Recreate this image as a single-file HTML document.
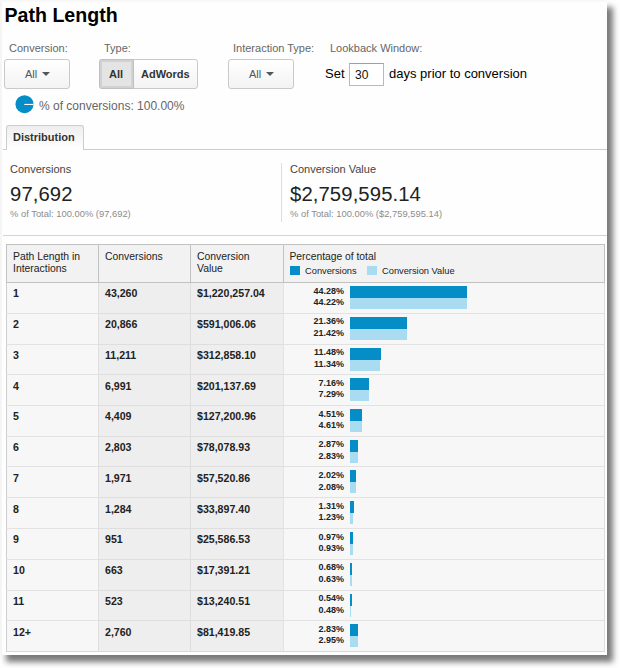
<!DOCTYPE html>
<html><head><meta charset="utf-8"><title>Path Length</title>
<style>
*{margin:0;padding:0;box-sizing:border-box}
html,body{width:620px;height:668px;overflow:hidden;background:#fff}
body{font-family:"Liberation Sans",sans-serif;position:relative;color:#333}
#page{position:absolute;left:0;top:0;width:607px;height:655px;background:#fefefe;box-shadow:6px 6.5px 6px rgba(0,0,0,.53);border-top:2px solid #f8f8f8;border-left:2px solid #f5f5f5}
#wrap{position:absolute;left:0;top:0;width:620px;height:668px}
.t{position:absolute;white-space:nowrap;line-height:1}
h1{position:absolute;left:4.5px;top:3px;font-size:19.6px;font-weight:bold;color:#000;line-height:24px;white-space:nowrap}
.lab{font-size:11px;color:#666;top:43px}
.btn{position:absolute;top:59px;height:30px;border:1px solid #c9c9c9;border-radius:3px;background:linear-gradient(#fff,#f3f3f3);font-size:11px;color:#555;line-height:28px}
.arrow{position:absolute;width:0;height:0;border-left:4px solid transparent;border-right:4px solid transparent;border-top:4px solid #555;top:12px}
.row{position:absolute;left:6px;width:599px}
.c{position:absolute;top:0;height:100%;border-top:1px solid #e2e2e2;border-left:1px solid #e2e2e2}
.c1{left:0;width:92px;background:#f7f7f7;border-left-color:#cfcfcf}
.c2{left:92px;width:92px;background:#eee;border-color:#dedede}
.c3{left:184px;width:93px;background:#eee;border-color:#dedede}
.c4{left:277px;width:322px;background:#f7f7f7;border-right:1px solid #dedede}
.row span{position:absolute;white-space:nowrap;line-height:1;font-weight:bold}
.b{font-size:10.6px;color:#222}
.p{font-size:9px;color:#222;right:261px;text-align:right}
.d,.l{position:absolute;left:344px;height:12px;top:4px;background:#058dc7}
.l{top:16px;height:11px;background:#a9dcf1}
.th{position:absolute;z-index:2;top:244px;height:39px;background:#f2f2f2;border:1px solid #c1c1c1;border-right:none}
.th span{position:absolute;left:6px;top:6px;font-size:10.4px;line-height:12px;color:#222;white-space:nowrap}
</style></head><body>
<div id="page"></div>
<div id="wrap">
<h1>Path Length</h1>
<span class="t lab" style="left:9px">Conversion:</span>
<span class="t lab" style="left:104px">Type:</span>
<span class="t lab" style="left:233px">Interaction Type:</span>
<span class="t lab" style="left:330px">Lookback Window:</span>

<div class="btn" style="left:4px;width:66px"><span style="position:absolute;left:20px">All</span><i class="arrow" style="left:37px"></i></div>
<div class="btn" style="left:228px;width:66px"><span style="position:absolute;left:20px">All</span><i class="arrow" style="left:37px"></i></div>

<div class="btn" style="left:99px;width:99px;font-weight:bold;color:#333">
 <div style="position:absolute;left:-1px;top:-1px;width:35px;height:30px;background:#e4e4e4;border:1px solid #c0c0c0;border-radius:3px 0 0 3px;box-shadow:inset 0 0 0 2px #d2d2d2"></div>
 <span style="position:absolute;left:9px">All</span>
 <span style="position:absolute;left:41px">AdWords</span>
</div>

<span class="t" style="left:325px;top:66.5px;font-size:13px;color:#000">Set</span>
<div style="position:absolute;left:349px;top:63px;width:35px;height:23px;border:1px solid #b9b9b9;border-top-color:#a0a0a0;background:#fff"></div>
<span class="t" style="left:355px;top:69px;font-size:12px;color:#111">30</span>
<span class="t" style="left:389px;top:66.5px;font-size:13px;color:#000">days prior to conversion</span>

<svg style="position:absolute;left:15px;top:95px" width="19" height="19" viewBox="0 0 19 19"><circle cx="9.5" cy="9.2" r="9" fill="#058dc7"/><rect x="9.3" y="8.9" width="9.2" height="1.1" fill="#fff"/></svg>
<span class="t" style="left:39px;top:99.5px;font-size:12px;color:#666">% of conversions: 100.00%</span>

<!-- tab -->
<div style="position:absolute;left:3px;top:149px;width:604px;height:1px;background:#ccc"></div>
<div style="position:absolute;left:6px;top:125px;width:78px;height:25px;border:1px solid #ccc;border-bottom:none;border-radius:3px 3px 0 0;background:linear-gradient(#eee,#fff)"></div>
<span class="t" style="left:13px;top:132px;font-size:11px;font-weight:bold;color:#333">Distribution</span>

<!-- metrics -->
<span class="t" style="left:10px;top:163.5px;font-size:11px;color:#444">Conversions</span>
<span class="t" style="left:10px;top:184px;font-size:20.3px;letter-spacing:.1px;color:#222">97,692</span>
<span class="t" style="left:10px;top:209px;font-size:9.4px;color:#8c8c8c">% of Total: 100.00% (97,692)</span>
<div style="position:absolute;left:281px;top:163px;width:1px;height:59px;background:#ddd"></div>
<span class="t" style="left:290px;top:163.5px;font-size:11px;color:#444">Conversion Value</span>
<span class="t" style="left:290px;top:184px;font-size:20.3px;letter-spacing:.1px;color:#222">$2,759,595.14</span>
<span class="t" style="left:290px;top:209px;font-size:9.4px;color:#8c8c8c">% of Total: 100.00% ($2,759,595.14)</span>
<div style="position:absolute;left:3px;top:235px;width:604px;height:1px;background:#d4d4d4"></div>

<!-- table header -->
<div class="th" style="left:6px;width:92px"><span>Path Length in<br>Interactions</span></div>
<div class="th" style="left:98px;width:92px"><span>Conversions</span></div>
<div class="th" style="left:190px;width:93px"><span>Conversion<br>Value</span></div>
<div class="th" style="left:283px;width:322px;border-right:1px solid #c1c1c1"><span style="font-size:10.3px;left:5.5px">Percentage of total</span>
 <i style="position:absolute;left:6px;top:21px;width:10px;height:9px;background:#058dc7"></i>
 <span style="left:21px;top:22px;font-size:9.3px;line-height:1">Conversions</span>
 <i style="position:absolute;left:83px;top:21px;width:10px;height:9px;background:#a9dcf1"></i>
 <span style="left:98px;top:22px;font-size:9.3px;line-height:1">Conversion Value</span>
</div>
<div class="row" style="top:282px;height:31px">
<div class="c c1"></div><div class="c c2"></div><div class="c c3"></div><div class="c c4"></div>
<span class="b" style="left:7px;top:6.3px">1</span>
<span class="b" style="left:99px;top:6.3px">43,260</span>
<span class="b" style="left:191px;top:6.3px">$1,220,257.04</span>
<span class="p" style="top:4.6px">44.28%</span><span class="p" style="top:16.2px">44.22%</span>
<i class="d" style="width:117px"></i><i class="l" style="width:117px"></i>
</div>
<div class="row" style="top:313px;height:31px">
<div class="c c1"></div><div class="c c2"></div><div class="c c3"></div><div class="c c4"></div>
<span class="b" style="left:7px;top:6.05px">2</span>
<span class="b" style="left:99px;top:6.05px">20,866</span>
<span class="b" style="left:191px;top:6.05px">$591,006.06</span>
<span class="p" style="top:4.35px">21.36%</span><span class="p" style="top:15.95px">21.42%</span>
<i class="d" style="width:57px"></i><i class="l" style="width:57px"></i>
</div>
<div class="row" style="top:344px;height:30px">
<div class="c c1"></div><div class="c c2"></div><div class="c c3"></div><div class="c c4"></div>
<span class="b" style="left:7px;top:5.8px">3</span>
<span class="b" style="left:99px;top:5.8px">11,211</span>
<span class="b" style="left:191px;top:5.8px">$312,858.10</span>
<span class="p" style="top:4.1px">11.48%</span><span class="p" style="top:15.7px">11.34%</span>
<i class="d" style="width:31px"></i><i class="l" style="width:30px"></i>
</div>
<div class="row" style="top:374px;height:31px">
<div class="c c1"></div><div class="c c2"></div><div class="c c3"></div><div class="c c4"></div>
<span class="b" style="left:7px;top:6.55px">4</span>
<span class="b" style="left:99px;top:6.55px">6,991</span>
<span class="b" style="left:191px;top:6.55px">$201,137.69</span>
<span class="p" style="top:4.85px">7.16%</span><span class="p" style="top:16.45px">7.29%</span>
<i class="d" style="width:19px"></i><i class="l" style="width:19px"></i>
</div>
<div class="row" style="top:405px;height:31px">
<div class="c c1"></div><div class="c c2"></div><div class="c c3"></div><div class="c c4"></div>
<span class="b" style="left:7px;top:6.3px">5</span>
<span class="b" style="left:99px;top:6.3px">4,409</span>
<span class="b" style="left:191px;top:6.3px">$127,200.96</span>
<span class="p" style="top:4.6px">4.51%</span><span class="p" style="top:16.2px">4.61%</span>
<i class="d" style="width:12px"></i><i class="l" style="width:12px"></i>
</div>
<div class="row" style="top:436px;height:30px">
<div class="c c1"></div><div class="c c2"></div><div class="c c3"></div><div class="c c4"></div>
<span class="b" style="left:7px;top:6.05px">6</span>
<span class="b" style="left:99px;top:6.05px">2,803</span>
<span class="b" style="left:191px;top:6.05px">$78,078.93</span>
<span class="p" style="top:4.35px">2.87%</span><span class="p" style="top:15.95px">2.83%</span>
<i class="d" style="width:8px"></i><i class="l" style="width:8px"></i>
</div>
<div class="row" style="top:466px;height:31px">
<div class="c c1"></div><div class="c c2"></div><div class="c c3"></div><div class="c c4"></div>
<span class="b" style="left:7px;top:6.8px">7</span>
<span class="b" style="left:99px;top:6.8px">1,971</span>
<span class="b" style="left:191px;top:6.8px">$57,520.86</span>
<span class="p" style="top:5.1px">2.02%</span><span class="p" style="top:16.7px">2.08%</span>
<i class="d" style="width:6px"></i><i class="l" style="width:6px"></i>
</div>
<div class="row" style="top:497px;height:31px">
<div class="c c1"></div><div class="c c2"></div><div class="c c3"></div><div class="c c4"></div>
<span class="b" style="left:7px;top:6.55px">8</span>
<span class="b" style="left:99px;top:6.55px">1,284</span>
<span class="b" style="left:191px;top:6.55px">$33,897.40</span>
<span class="p" style="top:4.85px">1.31%</span><span class="p" style="top:16.45px">1.23%</span>
<i class="d" style="width:4px"></i><i class="l" style="width:3px"></i>
</div>
<div class="row" style="top:528px;height:31px">
<div class="c c1"></div><div class="c c2"></div><div class="c c3"></div><div class="c c4"></div>
<span class="b" style="left:7px;top:6.3px">9</span>
<span class="b" style="left:99px;top:6.3px">951</span>
<span class="b" style="left:191px;top:6.3px">$25,586.53</span>
<span class="p" style="top:4.6px">0.97%</span><span class="p" style="top:16.2px">0.93%</span>
<i class="d" style="width:3px"></i><i class="l" style="width:3px"></i>
</div>
<div class="row" style="top:559px;height:31px">
<div class="c c1"></div><div class="c c2"></div><div class="c c3"></div><div class="c c4"></div>
<span class="b" style="left:7px;top:6.05px">10</span>
<span class="b" style="left:99px;top:6.05px">663</span>
<span class="b" style="left:191px;top:6.05px">$17,391.21</span>
<span class="p" style="top:4.35px">0.68%</span><span class="p" style="top:15.95px">0.63%</span>
<i class="d" style="width:2px"></i><i class="l" style="width:2px"></i>
</div>
<div class="row" style="top:590px;height:30px">
<div class="c c1"></div><div class="c c2"></div><div class="c c3"></div><div class="c c4"></div>
<span class="b" style="left:7px;top:5.8px">11</span>
<span class="b" style="left:99px;top:5.8px">523</span>
<span class="b" style="left:191px;top:5.8px">$13,240.51</span>
<span class="p" style="top:4.1px">0.54%</span><span class="p" style="top:15.7px">0.48%</span>
<i class="d" style="width:2px"></i><i class="l" style="width:1px"></i>
</div>
<div class="row" style="top:620px;height:31px">
<div class="c c1"></div><div class="c c2"></div><div class="c c3"></div><div class="c c4"></div>
<span class="b" style="left:7px;top:6.55px">12+</span>
<span class="b" style="left:99px;top:6.55px">2,760</span>
<span class="b" style="left:191px;top:6.55px">$81,419.85</span>
<span class="p" style="top:4.85px">2.83%</span><span class="p" style="top:16.45px">2.95%</span>
<i class="d" style="width:8px"></i><i class="l" style="width:8px"></i>
</div>
<div style="position:absolute;left:6px;top:651px;width:599px;height:1px;background:#d8d8d8"></div>
</div>
</body></html>
